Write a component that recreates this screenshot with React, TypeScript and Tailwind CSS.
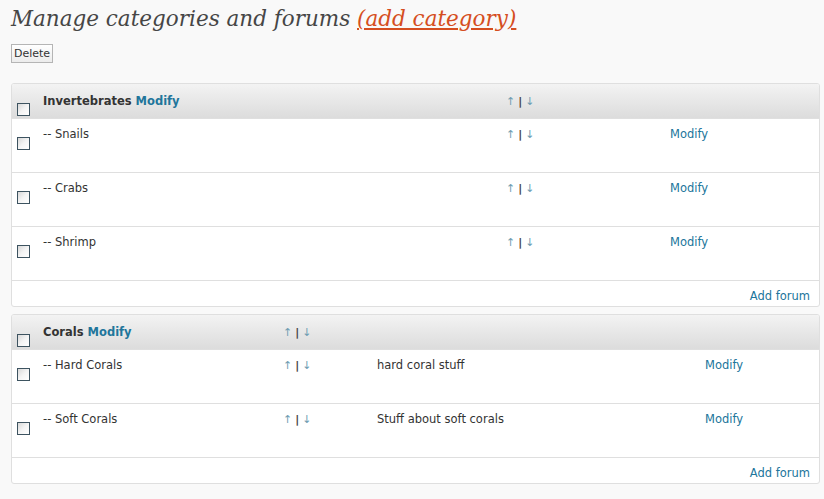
import { Fragment } from "react";

type Forum = { name: string; desc: string };

type Section = {
	name: string;
	nameCol: string;
	arrowCol: string;
	descCol: string;
	forums: Forum[];
};

const sections: Section[] = [
	{
		name: "Invertebrates",
		nameCol: "w-[463px]",
		arrowCol: "w-[164px]",
		descCol: "hidden",
		forums: [
			{ name: "Snails", desc: "" },
			{ name: "Crabs", desc: "" },
			{ name: "Shrimp", desc: "" },
		],
	},
	{
		name: "Corals",
		nameCol: "w-[240px]",
		arrowCol: "w-[94px]",
		descCol: "w-[328px]",
		forums: [
			{ name: "Hard Corals", desc: "hard coral stuff" },
			{ name: "Soft Corals", desc: "Stuff about soft corals" },
		],
	},
];

function Checkbox()
{
	return (
		<span className="block w-[13px] h-[13px] border border-[#3d5360] bg-gradient-to-br from-[#d8d8d8] via-[#f4f4f4] to-white" />
	);
}

function Arrows()
{
	return (
		<span className="text-[11px] leading-none whitespace-nowrap">
			<a className="text-[#6f9db2]">↑</a>
			<span className="font-bold text-[#444] mx-[3px]">|</span>
			<a className="text-[#6f9db2]">↓</a>
		</span>
	);
}

function SectionTable({ section }: { section: Section })
{
	return (
		<div className="w-[809px] border border-[#dfdfdf] rounded-[3px] bg-white overflow-hidden">
			<div className="flex h-[35px] bg-gradient-to-b from-[#f3f3f3] to-[#dcdcdc] border-b border-[#dfdfdf]">
				<div className="w-[31px] pl-[5px] pt-[19px]">
					<Checkbox />
				</div>
				<div className={ `${ section.nameCol } pt-[10px] font-bold text-[#333]` }>
					{ section.name } <a className="text-[#21759b]">Modify</a>
				</div>
				<div className={ `${ section.arrowCol } pt-[10px]` }>
					<Arrows />
				</div>
			</div>
			{ section.forums.map( forum => (
				<Fragment key={ forum.name }>
					<div className="flex h-[54px] border-b border-[#dfdfdf] text-[#333]">
						<div className="w-[31px] pl-[5px] pt-[18px]">
							<Checkbox />
						</div>
						<div className={ `${ section.nameCol } pt-[8px]` }>-- { forum.name }</div>
						<div className={ `${ section.arrowCol } pt-[8px]` }>
							<Arrows />
						</div>
						<div className={ `${ section.descCol } pt-[8px]` }>{ forum.desc }</div>
						<div className="pt-[8px]">
							<a className="text-[#21759b]">Modify</a>
						</div>
					</div>
				</Fragment>
			)) }
			<div className="h-[25px] flex justify-end items-center pr-[9px] pt-[4px]">
				<a className="text-[#21759b]">Add forum</a>
			</div>
		</div>
	);
}

export default function App()
{
	return (
		<div className="min-h-[499px] bg-[#f9f9f9] pl-[11px] text-[11.5px] leading-[14px] font-['DejaVu_Sans',Verdana,sans-serif] text-[#333]">
			<h2 className="pt-[4px] text-[21.5px] leading-[30px] italic font-['DejaVu_Serif',Georgia,serif] text-[#464646]">
				Manage categories and forums <a className="text-[#d54e21] underline">(add category)</a>
			</h2>
			<button className="mt-[10px] h-[19px] px-[2px] border border-[#b5b5b5] bg-gradient-to-b from-white to-[#ececec] text-[11px] leading-none text-[#333]">
				Delete
			</button>
			<div className="mt-[20px] flex flex-col gap-[7px]">
				{ sections.map( section => (
					<SectionTable key={ section.name } section={ section } />
				)) }
			</div>
		</div>
	);
}
